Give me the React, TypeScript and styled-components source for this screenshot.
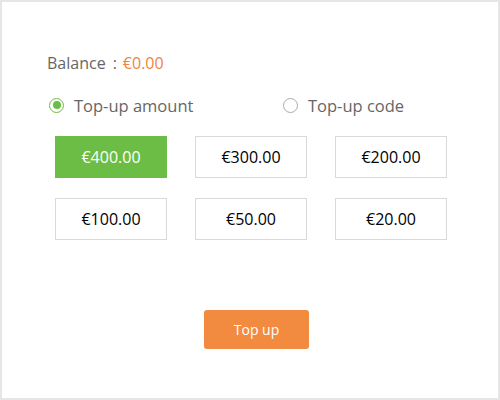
import styled, { createGlobalStyle } from 'styled-components';
import { useState } from 'react';

const GlobalStyle = createGlobalStyle`
  html, body { margin: 0; padding: 0; background: #fff; }
  body { font-family: "Open Sans", "Liberation Sans", sans-serif; }
`;

const amounts = ['€400.00', '€300.00', '€200.00', '€100.00', '€50.00', '€20.00'];

const App = () => {
  const [mode, setMode] = useState('amount');
  const [selected, setSelected] = useState(0);

  return (
    <>
      <GlobalStyle />
      <Frame>
        <Balance>
          Balance<Colon>:</Colon>
          <Money>€0.00</Money>
        </Balance>
        <RadioRow>
          <RadioOption wide onClick={() => setMode('amount')}>
            <RadioCircle checked={mode === 'amount'} />
            Top-up amount
          </RadioOption>
          <RadioOption onClick={() => setMode('code')}>
            <RadioCircle checked={mode === 'code'} />
            Top-up code
          </RadioOption>
        </RadioRow>
        <AmountGrid>
          {amounts.map((a, i) => (
            <AmountButton key={a} active={selected === i} onClick={() => setSelected(i)}>
              {a}
            </AmountButton>
          ))}
        </AmountGrid>
        <Footer>
          <TopUpButton>Top up</TopUpButton>
        </Footer>
      </Frame>
    </>
  );
};

const Frame = styled.div`
  width: 500px;
  height: 400px;
  box-sizing: border-box;
  border: 2px solid #e6e6e6;
  padding: 51px 0 0 45px;
`;

const Balance = styled.div`
  font-size: 16px;
  line-height: 20px;
  color: #666;
`;

const Colon = styled.span`
  margin: 0 6px 0 7px;
`;

const Money = styled.span`
  color: #f0843c;
`;

const RadioRow = styled.div`
  display: flex;
  margin-top: 20px;
  height: 24px;
  align-items: center;
`;

const RadioOption = styled.label`
  display: flex;
  align-items: center;
  gap: 10px;
  width: ${(p) => (p.wide ? '234px' : 'auto')};
  font-size: 16.5px;
  color: #666;
  cursor: pointer;
`;

const RadioCircle = styled.span`
  width: 15px;
  height: 15px;
  box-sizing: border-box;
  border-radius: 50%;
  border: 1px solid ${(p) => (p.checked ? '#6cbd45' : '#aaa')};
  display: flex;
  align-items: center;
  justify-content: center;
  margin-left: 2px;

  &::after {
    content: '';
    width: 8px;
    height: 8px;
    border-radius: 50%;
    background: ${(p) => (p.checked ? '#6cbd45' : 'transparent')};
  }
`;

const AmountGrid = styled.div`
  display: grid;
  grid-template-columns: repeat(3, 112px);
  grid-auto-rows: 42px;
  column-gap: 28px;
  row-gap: 20px;
  margin: 19px 0 0 8px;
`;

const AmountButton = styled.div`
  box-sizing: border-box;
  display: flex;
  align-items: center;
  justify-content: center;
  font-size: 16px;
  color: ${(p) => (p.active ? '#fff' : '#000')};
  background: ${(p) => (p.active ? '#6cbd45' : '#fff')};
  border: 1px solid ${(p) => (p.active ? '#6cbd45' : '#d9d9d9')};
  cursor: pointer;
`;

const Footer = styled.div`
  margin: 70px 0 0 157px;
`;

const TopUpButton = styled.button`
  width: 105px;
  height: 39px;
  border: none;
  border-radius: 3px;
  background: #f28a3f;
  color: #fff;
  font-family: inherit;
  font-size: 14px;
  cursor: pointer;
`;

export default App;
